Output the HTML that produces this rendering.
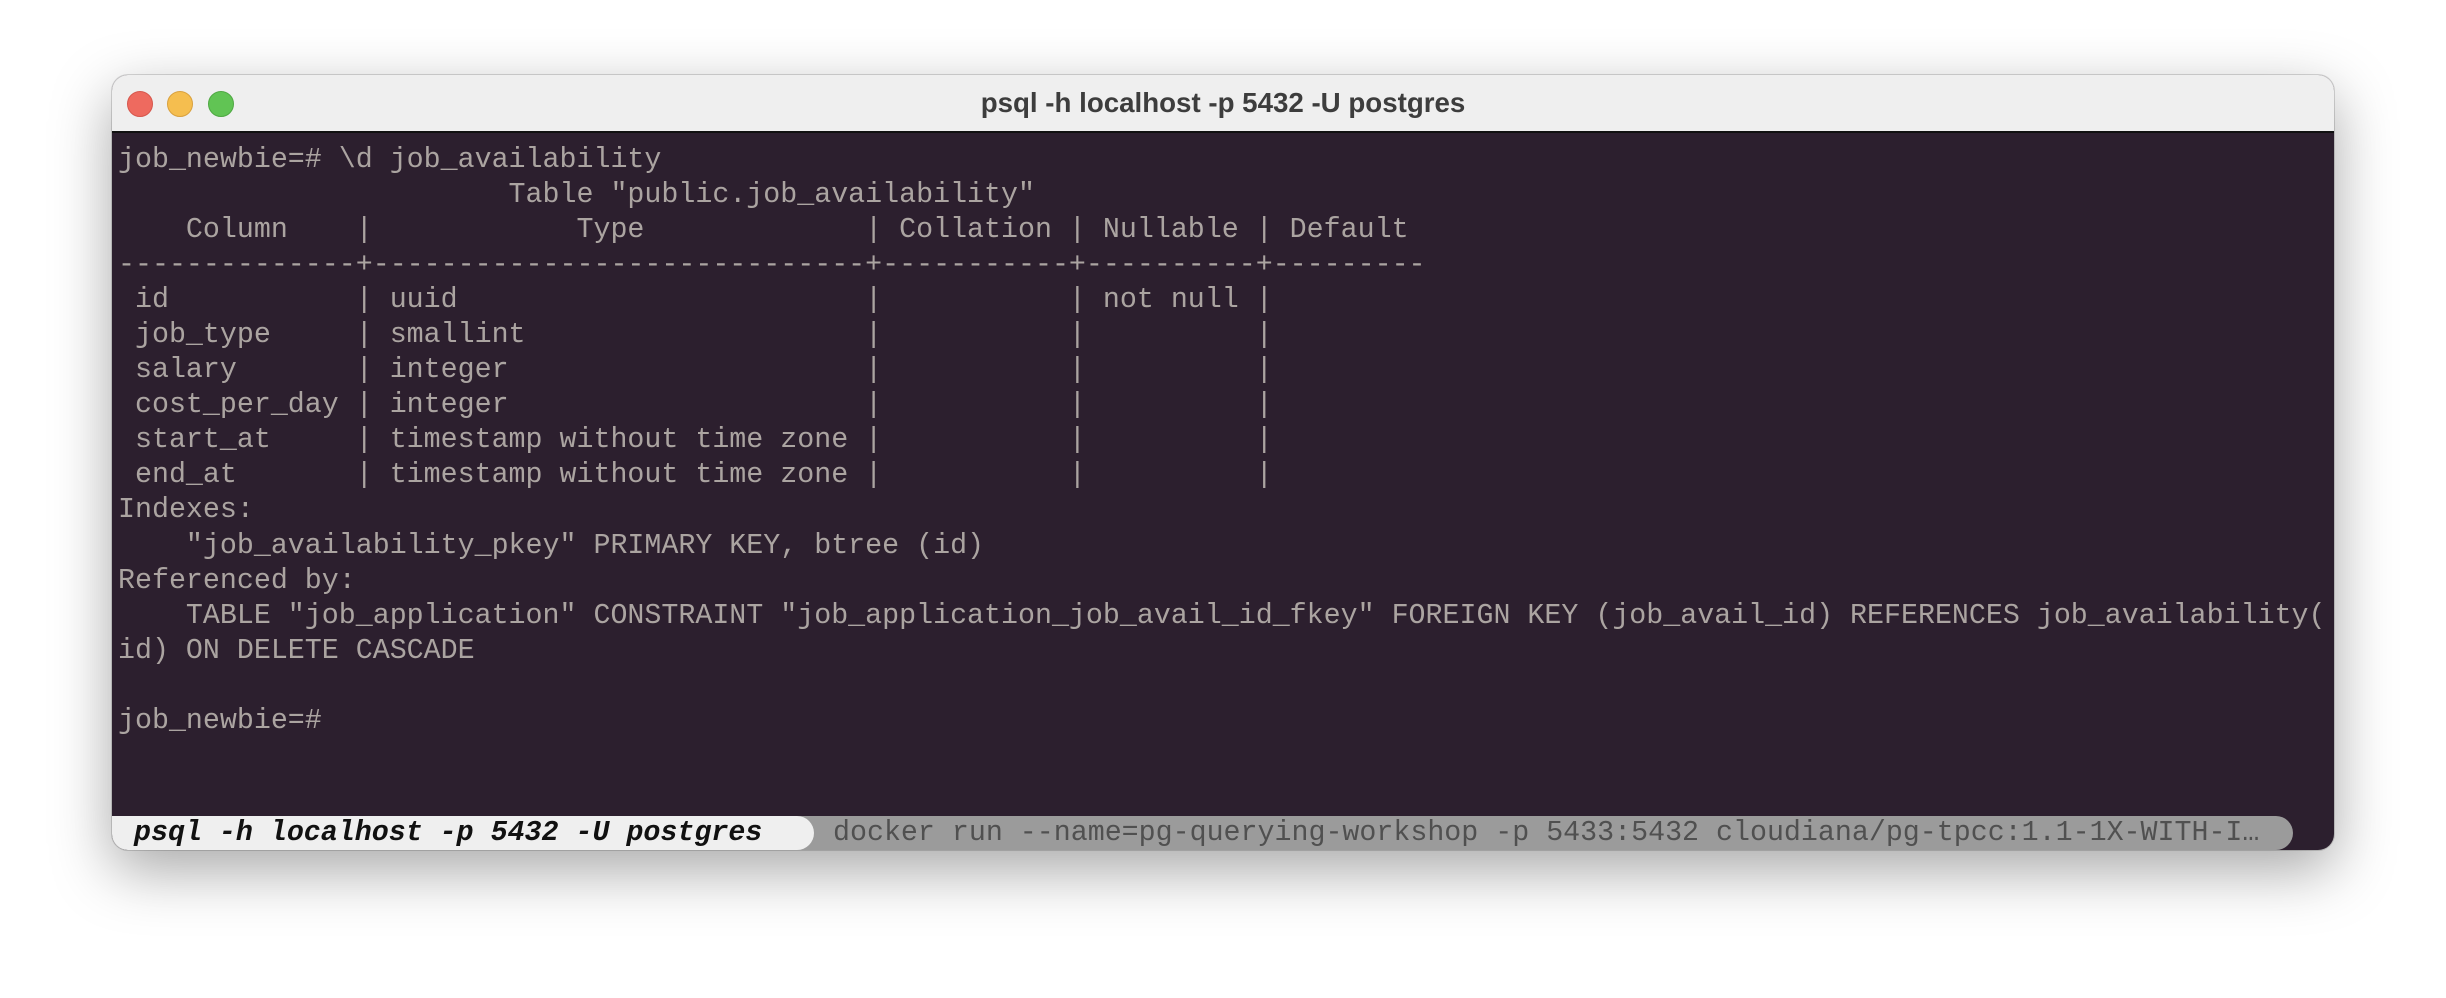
<!DOCTYPE html>
<html><head><meta charset="utf-8"><style>
html,body{margin:0;padding:0;width:2446px;height:998px;background:#fff;overflow:hidden}
.win{position:absolute;left:112px;top:75px;width:2222px;height:775px;border-radius:16px;background:#2c1f2e;box-shadow:0 20px 60px rgba(0,0,0,0.35),0 0 0 1px rgba(0,0,0,0.15);overflow:hidden}
.title{position:absolute;left:0;top:0;width:100%;height:58px;background:#efefef;border-bottom:2px solid #111;box-sizing:border-box}
.title .t{position:absolute;left:0;right:0;top:12px;text-align:center;font:bold 27.7px "Liberation Sans",sans-serif;color:#3d3d3d}
.dot{position:absolute;top:16px;width:24px;height:24px;border-radius:50%}
pre{position:absolute;left:6px;top:68px;margin:0;font:28.3px/35.05px "Liberation Mono",monospace;color:#aba4a1;white-space:pre}
.bar{position:absolute;left:0;top:741px;height:34px;width:2181px;background:#9b9b9b;border-radius:0 17px 17px 0}
.bar .r{position:absolute;left:721px;top:0;font:28.3px/34px "Liberation Mono",monospace;color:#505050;white-space:pre}
.bar .l{position:absolute;left:0;top:0;width:702px;height:34px;background:#efefef;border-radius:0 17px 17px 16px;font:italic bold 28.3px/34px "Liberation Mono",monospace;color:#111;white-space:pre;padding-left:22px;box-sizing:border-box}
</style></head><body>
<div class="win">
<div class="title"><div class="dot" style="left:15px;background:#ee6a5f;border:1px solid #d6574d"></div><div class="dot" style="left:55px;background:#f5be4f;border:1px solid #d9a13e"></div><div class="dot" style="left:96px;background:#61c454;border:1px solid #4fa843"></div><div class="t">psql -h localhost -p 5432 -U postgres</div></div>
<pre>job_newbie=# \d job_availability
                       Table "public.job_availability"
    Column    |            Type             | Collation | Nullable | Default
--------------+-----------------------------+-----------+----------+---------
 id           | uuid                        |           | not null |
 job_type     | smallint                    |           |          |
 salary       | integer                     |           |          |
 cost_per_day | integer                     |           |          |
 start_at     | timestamp without time zone |           |          |
 end_at       | timestamp without time zone |           |          |
Indexes:
    "job_availability_pkey" PRIMARY KEY, btree (id)
Referenced by:
    TABLE "job_application" CONSTRAINT "job_application_job_avail_id_fkey" FOREIGN KEY (job_avail_id) REFERENCES job_availability(
id) ON DELETE CASCADE

job_newbie=#</pre>
<div class="bar"><div class="r">docker run --name=pg-querying-workshop -p 5433:5432 cloudiana/pg-tpcc:1.1-1X-WITH-I…</div><div class="l">psql -h localhost -p 5432 -U postgres</div></div>
</div>
</body></html>
